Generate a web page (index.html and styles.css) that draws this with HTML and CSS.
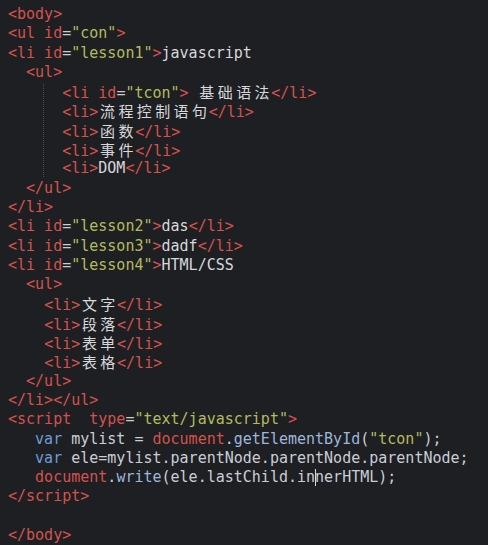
FILE: index.html
```html
<!DOCTYPE html>
<html>
<head>
<meta charset="utf-8">
<link rel="stylesheet" href="styles.css">
</head>
<body>
<div class="editor">
<div class="line"><span class="t">&lt;body&gt;</span></div>
<div class="line"><span class="t">&lt;ul id</span><span class="p">=</span><span class="s">"con"</span><span class="t">&gt;</span></div>
<div class="line"><span class="t">&lt;li id</span><span class="p">=</span><span class="s">"lesson1"</span><span class="t">&gt;</span><span class="x">javascript</span></div>
<div class="line">  <span class="t">&lt;ul&gt;</span></div>
<div class="guide-block">
<div class="line">      <span class="t">&lt;li id</span><span class="p">=</span><span class="s">"tcon"</span><span class="t">&gt;</span> <span class="cjk">基础语法</span><span class="t">&lt;/li&gt;</span></div>
<div class="line">      <span class="t">&lt;li&gt;</span><span class="cjk">流程控制语句</span><span class="t">&lt;/li&gt;</span></div>
<div class="line">      <span class="t">&lt;li&gt;</span><span class="cjk">函数</span><span class="t">&lt;/li&gt;</span></div>
<div class="line">      <span class="t">&lt;li&gt;</span><span class="cjk">事件</span><span class="t">&lt;/li&gt;</span></div>
<div class="line">      <span class="t">&lt;li&gt;</span><span class="x">DOM</span><span class="t">&lt;/li&gt;</span></div>
</div>
<div class="line">  <span class="t">&lt;/ul&gt;</span></div>
<div class="line"><span class="t">&lt;/li&gt;</span></div>
<div class="line"><span class="t">&lt;li id</span><span class="p">=</span><span class="s">"lesson2"</span><span class="t">&gt;</span><span class="x">das</span><span class="t">&lt;/li&gt;</span></div>
<div class="line"><span class="t">&lt;li id</span><span class="p">=</span><span class="s">"lesson3"</span><span class="t">&gt;</span><span class="x">dadf</span><span class="t">&lt;/li&gt;</span></div>
<div class="line"><span class="t">&lt;li id</span><span class="p">=</span><span class="s">"lesson4"</span><span class="t">&gt;</span><span class="x">HTML/CSS</span></div>
<div class="line">  <span class="t">&lt;ul&gt;</span></div>
<div class="line">    <span class="t">&lt;li&gt;</span><span class="cjk">文字</span><span class="t">&lt;/li&gt;</span></div>
<div class="line">    <span class="t">&lt;li&gt;</span><span class="cjk">段落</span><span class="t">&lt;/li&gt;</span></div>
<div class="line">    <span class="t">&lt;li&gt;</span><span class="cjk">表单</span><span class="t">&lt;/li&gt;</span></div>
<div class="line">    <span class="t">&lt;li&gt;</span><span class="cjk">表格</span><span class="t">&lt;/li&gt;</span></div>
<div class="line">  <span class="t">&lt;/ul&gt;</span></div>
<div class="line"><span class="t">&lt;/li&gt;&lt;/ul&gt;</span></div>
<div class="line"><span class="t">&lt;script  type</span><span class="p">=</span><span class="s">"text/javascript"</span><span class="t">&gt;</span></div>
<div class="line">   <span class="k">var</span> <span class="v">mylist</span> <span class="p">=</span> <span class="t">document</span><span class="v">.</span><span class="m">getElementById</span><span class="v">(</span><span class="s">"tcon"</span><span class="v">);</span></div>
<div class="line">   <span class="k">var</span> <span class="v">ele=mylist.parentNode.parentNode.parentNode;</span></div>
<div class="line">   <span class="t">document</span><span class="v">.</span><span class="m">write</span><span class="v">(ele.lastChild.in<span class="cursor"></span>nerHTML);</span></div>
<div class="line"><span class="t">&lt;/script&gt;</span></div>
<div class="line"> </div>
<div class="line"><span class="t">&lt;/body&gt;</span></div>
</div>
</body>
</html>
```

FILE: styles.css
```css
html, body {
  margin: 0;
  padding: 0;
  background: #1e1f22;
}
body {
  width: 488px;
  height: 545px;
  overflow: hidden;
}
.editor {
  padding: 5px 0 0 8px;
  font-family: "DejaVu Sans Mono", "Liberation Mono", monospace;
  font-size: 15px;
  line-height: 19.3px;
  color: #c9ced6;
}
.line {
  white-space: pre;
  height: 19.3px;
}
.guide-block {
  position: relative;
}
.guide-block::before {
  content: "";
  position: absolute;
  left: 35px;
  top: 2px;
  bottom: 2px;
  border-left: 1px dotted #4a4c52;
}
.t { color: #d4524d; }
.p { color: #c9ccd2; }
.s { color: #b3bb5e; }
.x { color: #d6d8dc; }
.k { color: #6f9bd9; }
.v { color: #c9ced6; }
.m { color: #9db6dc; }
.cjk {
  font-family: "Noto Sans CJK SC", sans-serif;
  font-size: 15px;
  letter-spacing: 3.4px;
  padding-left: 1.7px;
  margin-right: -1.7px;
  color: #d6d8dc;
}
.cursor {
  display: inline-block;
  width: 1px;
  height: 17px;
  margin-right: -1px;
  background: #d8d8d8;
  vertical-align: -4px;
}
```
